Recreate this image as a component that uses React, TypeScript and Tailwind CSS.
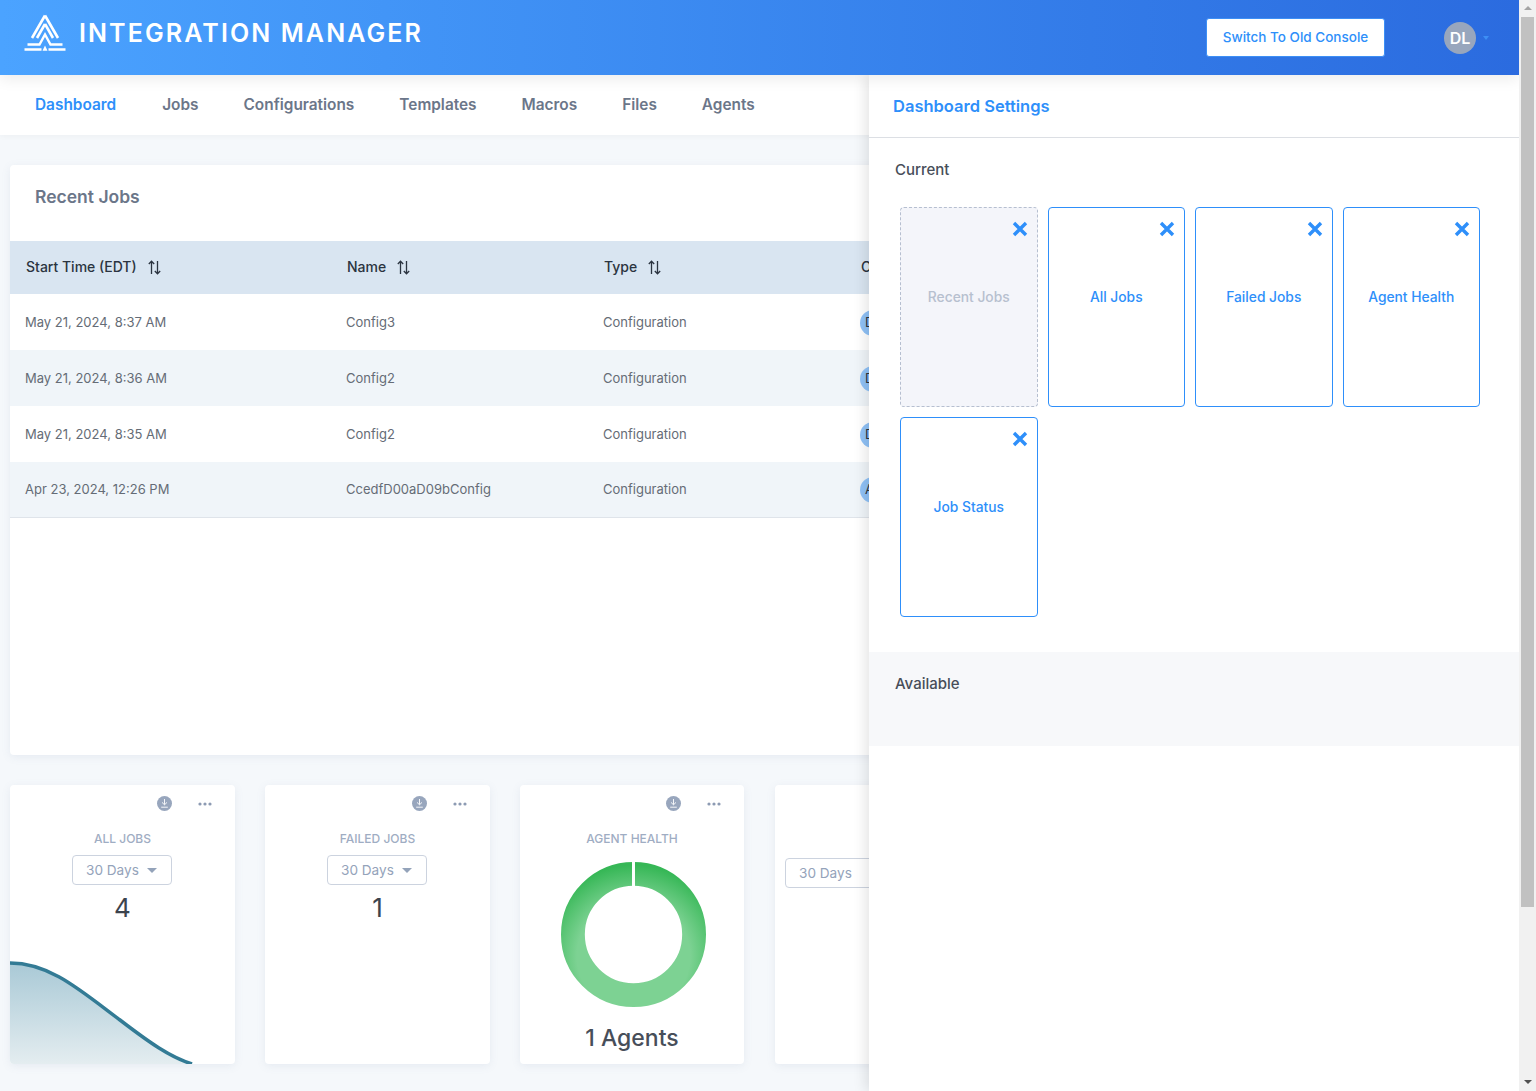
const JOBS = [
  { time: "May 21, 2024, 8:37 AM", name: "Config3", type: "Configuration", who: "D" },
  { time: "May 21, 2024, 8:36 AM", name: "Config2", type: "Configuration", who: "D" },
  { time: "May 21, 2024, 8:35 AM", name: "Config2", type: "Configuration", who: "D" },
  { time: "Apr 23, 2024, 12:26 PM", name: "CcedfD00aD09bConfig", type: "Configuration", who: "A" },
];

const NAV = ["Jobs", "Configurations", "Templates", "Macros", "Files", "Agents"];

function Logo() {
  return (
    <svg width="42" height="37" viewBox="0 0 42 37" fill="none" stroke="#fff" strokeWidth="2.6">
      <path d="M21 1.5 L8 24 M21 1.5 L34 24" />
      <path d="M21 10 L13 24 M21 10 L29 24" />
      <path d="M3.5 30.5 H15.5 L21 20.5 L26.5 30.5 H38.5" strokeWidth="2.4" />
      <path d="M0.5 35.5 H17.5 M24.5 35.5 H41.5" strokeWidth="2.4" />
      <path d="M18.5 36.7 L21 31.5 L23.5 36.7 Z" fill="#fff" stroke="none" />
    </svg>
  );
}

function SortArrows() {
  return (
    <svg width="15" height="15" viewBox="0 0 15 15" fill="none" stroke="#2b3440" strokeWidth="1.3" className="ml-[10px] mt-[2px]">
      <path d="M4.5 14 V1.5 M1.8 4 L4.5 1.2 L7.2 4" />
      <path d="M10.5 1 V13.5 M7.8 11 L10.5 13.8 L13.2 11" />
    </svg>
  );
}

function CardIcons() {
  return (
    <div className="absolute right-[23px] top-[11px] flex items-center gap-[26px]">
      <svg width="15" height="15" viewBox="0 0 15 15">
        <circle cx="7.5" cy="7.5" r="7.5" fill="#98a6bd" />
        <path d="M7.5 3 V8.6 M5 6.4 L7.5 8.8 L10 6.4 M4.2 11.2 H10.8" stroke="#fff" strokeWidth="0.9" fill="none" />
      </svg>
      <svg width="14" height="4" viewBox="0 0 14 4" fill="#8d9bb3">
        <circle cx="2" cy="2" r="1.6" />
        <circle cx="7" cy="2" r="1.6" />
        <circle cx="12" cy="2" r="1.6" />
      </svg>
    </div>
  );
}

function RangeSelect() {
  return (
    <div className="ml-[62px] flex h-[30px] w-[100px] items-center justify-between rounded-[4px] border border-[#ccd3df] pl-[13px] pr-[14px] text-[13.6px] text-[#94a3ba]">
      <span>30 Days</span>
      <span className="h-0 w-0 border-x-[5px] border-t-[5px] border-x-transparent border-t-[#94a3ba]" />
    </div>
  );
}

function WidgetOption({ label, muted }: { label: string; muted?: boolean }) {
  return (
    <div
      className={`relative flex h-[200px] items-start justify-center rounded-[4px] pt-[79px] text-[13.8px] font-medium ${
        muted
          ? "border border-dashed border-[#b6bfd0] bg-[#f4f5fa] text-[#b7c0cf]"
          : "border border-[#2e8ffa] bg-white text-[#2e8ffa]"
      }`}
    >
      <svg width="16" height="16" viewBox="0 0 16 16" className="absolute right-[9px] top-[13px]" stroke="#2e8ffa" strokeWidth="3.4">
        <path d="M2 2 L14 14 M14 2 L2 14" />
      </svg>
      {label}
    </div>
  );
}

export default function App() {
  return (
    <div className="flex h-[1091px] w-[1536px] overflow-hidden bg-[#f5f8fb] font-['Inter',sans-serif]">
      <div className="relative w-[1519px] overflow-hidden">
        {/* Top bar */}
        <header className="relative z-20 flex h-[75px] items-center bg-gradient-to-r from-[#4ba3ff] to-[#2b6bdf] pl-[24px] pr-[30px] shadow-[0_4px_14px_rgba(0,0,0,0.08)]">
          <div className="mb-[10px] flex items-center">
            <Logo />
            <span className="ml-[13px] text-[25px] font-semibold leading-[36px] tracking-[2.1px] text-white">INTEGRATION MANAGER</span>
          </div>
          <button className="ml-auto h-[39px] w-[179px] rounded-[3px] border border-[#3d8ff5] bg-white text-[13.5px] font-medium text-[#2e8ffa]">
            Switch To Old Console
          </button>
          <div className="ml-[59px] flex h-[32px] w-[32px] items-center justify-center rounded-full bg-[#98a6bd] text-[16px] font-semibold text-white">
            DL
          </div>
          <span className="ml-[7px] h-0 w-0 border-x-[3.5px] border-t-[4px] border-x-transparent border-t-[#3d8ff5]" />
        </header>

        {/* Nav */}
        <nav className="flex h-[60px] items-center gap-[45px] bg-white pl-[35px] text-[15.4px] font-semibold text-[#6b7689] shadow-[0_1px_6px_rgba(0,0,0,0.04)]">
          <span className="mr-[1px] text-[#2e8ffa]">Dashboard</span>
          {NAV.map((item) => (
            <span key={item}>{item}</span>
          ))}
        </nav>

        <main className="px-[10px] pt-[30px]">
          {/* Recent jobs */}
          <section className="h-[590px] w-[1200px] rounded-[4px] bg-white shadow-[0_2px_8px_rgba(120,140,170,0.12)]">
            <h2 className="flex h-[76px] items-center pb-[12px] pl-[25px] text-[17.5px] font-semibold text-[#6b7689]">Recent Jobs</h2>
            <div className="flex h-[53px] items-center bg-[#d9e5f1] pb-[2px] pl-[16px] text-[14px] font-medium text-[#2b3440]">
              <div className="flex w-[321px] items-center">Start Time (EDT) <SortArrows /></div>
              <div className="flex w-[257px] items-center">Name <SortArrows /></div>
              <div className="flex w-[257px] items-center">Type <SortArrows /></div>
              <div>Owner</div>
            </div>
            {JOBS.map((job, i) => (
              <div
                key={job.time}
                className={`flex h-[56px] items-center pl-[15px] text-[13px] text-[#656c76] ${
                  i % 2 === 1 ? "bg-[#f0f5f9]" : "bg-white"
                } ${i === 3 ? "border-b border-[#dfe4ea]" : "pt-[2px]"}`}
              >
                <div className="w-[321px]">{job.time}</div>
                <div className="w-[257px]">{job.name}</div>
                <div className="w-[257px]">{job.type}</div>
                <div className="flex h-[26px] w-[26px] items-center rounded-full bg-[#90c2f7] pl-[5px] text-[#2b3440]">{job.who}</div>
              </div>
            ))}
          </section>

          {/* Stat cards */}
          <div className="mt-[30px] flex gap-[30px]">
            <section className="relative h-[279px] w-[225px] overflow-hidden rounded-[4px] bg-white text-center shadow-[0_2px_8px_rgba(120,140,170,0.12)]">
              <CardIcons />
              <h3 className="pt-[46px] text-[12px] font-medium leading-[16px] text-[#9fadc3]">ALL JOBS</h3>
              <div className="mt-[8px]"><RangeSelect /></div>
              <p className="mt-[5px] text-[26px] leading-[36px] text-[#3c434d]">4</p>
              <svg width="225" height="104" viewBox="0 0 225 104" className="absolute bottom-0 left-0">
                <defs>
                  <linearGradient id="area" x1="0" y1="0" x2="0" y2="1">
                    <stop offset="0" stopColor="#a9c9d6" />
                    <stop offset="1" stopColor="#e4edf0" />
                  </linearGradient>
                </defs>
                <path d="M0 3 C40 3 70 30 110 60 C140 83 160 97 182 104 L0 104 Z" fill="url(#area)" />
                <path d="M0 3 C40 3 70 30 110 60 C140 83 160 97 182 104" fill="none" stroke="#337b95" strokeWidth="3.5" />
              </svg>
            </section>

            <section className="relative h-[279px] w-[225px] rounded-[4px] bg-white text-center shadow-[0_2px_8px_rgba(120,140,170,0.12)]">
              <CardIcons />
              <h3 className="pt-[46px] text-[12px] font-medium leading-[16px] text-[#9fadc3]">FAILED JOBS</h3>
              <div className="mt-[8px]"><RangeSelect /></div>
              <p className="mt-[5px] text-[26px] leading-[36px] text-[#3c434d]">1</p>
            </section>

            <section className="relative h-[279px] w-[224px] rounded-[4px] bg-white text-center shadow-[0_2px_8px_rgba(120,140,170,0.12)]">
              <CardIcons />
              <h3 className="pt-[46px] text-[12px] font-medium leading-[16px] text-[#9fadc3]">AGENT HEALTH</h3>
              <svg width="145" height="145" viewBox="0 0 146 146" className="ml-[41px] mt-[15px]">
                <defs>
                  <radialGradient id="ring" gradientUnits="userSpaceOnUse" cx="73" cy="95" r="92">
                    <stop offset="0.62" stopColor="#7dd293" />
                    <stop offset="1" stopColor="#36b756" />
                  </radialGradient>
                </defs>
                <circle cx="73" cy="73" r="61" fill="none" stroke="url(#ring)" strokeWidth="24" />
                <rect x="71.5" y="0" width="3" height="25" fill="#fff" />
              </svg>
              <p className="mt-[14px] text-[23px] font-medium leading-[34px] text-[#474e59]">1 Agents</p>
            </section>

            <section className="relative ml-[1px] h-[279px] w-[225px] rounded-[4px] bg-white pl-[10px] pt-[73px] shadow-[0_2px_8px_rgba(120,140,170,0.12)]">
              <div className="flex h-[30px] w-[100px] items-center rounded-[4px] border border-[#ccd3df] pl-[13px] text-[13.6px] text-[#94a3ba]">
                30 Days
              </div>
            </section>
          </div>
        </main>

        {/* Settings drawer */}
        <aside className="absolute bottom-0 left-[869px] right-0 top-[75px] z-10 bg-white shadow-[-4px_0_12px_rgba(0,0,0,0.1)]">
          <h2 className="flex h-[63px] items-center border-b border-[#dcdfe4] pl-[24px] text-[16.5px] font-semibold text-[#2e8ffa]">
            Dashboard Settings
          </h2>
          <div className="h-[514px] px-[26px] pt-[22px]">
            <h3 className="text-[15px] font-medium leading-[20px] text-[#474e59]">Current</h3>
            <div className="ml-[5px] mt-[27px] grid w-[580px] grid-cols-4 gap-[10px]">
              <WidgetOption label="Recent Jobs" muted />
              <WidgetOption label="All Jobs" />
              <WidgetOption label="Failed Jobs" />
              <WidgetOption label="Agent Health" />
              <WidgetOption label="Job Status" />
            </div>
          </div>
          <div className="h-[94px] bg-[#f7f8fa] pl-[26px] pt-[22px] text-[15px] font-medium leading-[20px] text-[#474e59]">Available</div>
        </aside>
      </div>

      {/* Page scrollbar */}
      <div className="flex w-[17px] flex-col items-center bg-[#f1f1f1] pt-[6px]">
        <span className="h-0 w-0 border-x-[4px] border-b-[4px] border-x-transparent border-b-[#a3a3a3]" />
        <div className="mt-[7px] h-[890px] w-[13px] bg-[#c1c1c1]" />
        <span className="mb-[7px] mt-auto h-0 w-0 border-x-[4px] border-t-[4px] border-x-transparent border-t-[#505050]" />
      </div>
    </div>
  );
}
